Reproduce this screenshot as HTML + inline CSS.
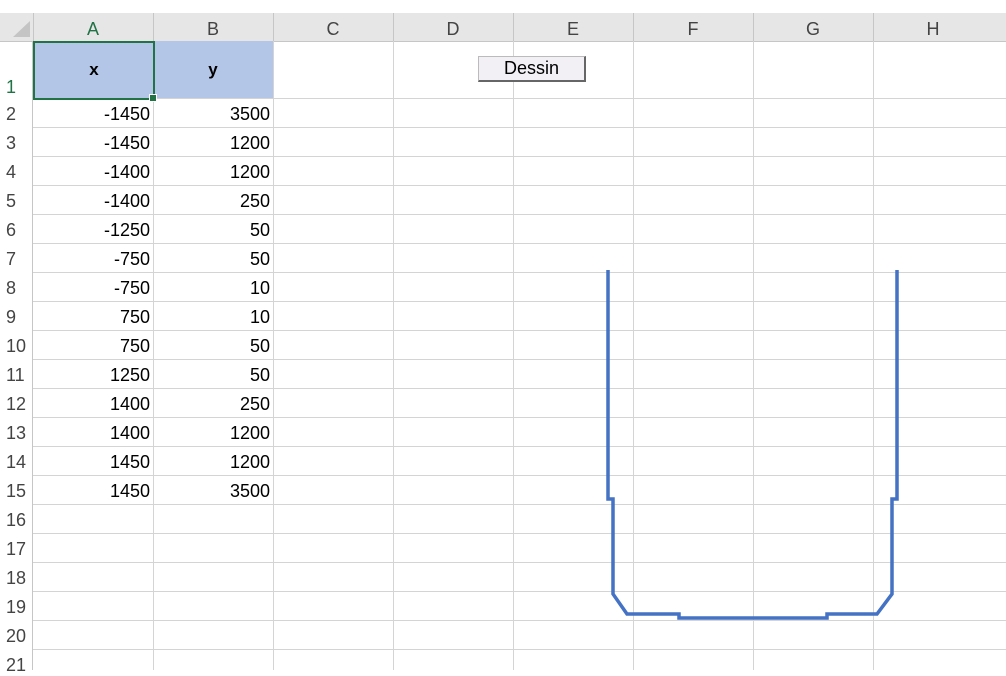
<!DOCTYPE html>
<html><head><meta charset="utf-8"><style>
body{margin:0;width:1006px;height:670px;overflow:hidden;background:#fff;font-family:"Liberation Sans",sans-serif;position:relative}
.a{position:absolute}
.hl{position:absolute;height:1px;background:#d4d4d4;left:33px;right:0}
.vl{position:absolute;width:1px;background:#d4d4d4;top:41px;bottom:0}
.ch{position:absolute;top:13px;height:28px;line-height:32px;text-align:center;font-size:18px;color:#444;width:120px}
.rh{position:absolute;left:0;width:30px;font-size:18px;color:#444;padding-left:6px}
.n{position:absolute;text-align:right;font-size:18px;color:#000;width:117px}
</style></head><body>
<div class="a" style="left:0;top:13px;width:1006px;height:28px;background:#e6e6e6;border-bottom:1px solid #c6c6c6"></div>
<div class="a" style="left:0;top:13px;width:33px;height:28px;background:#e6e6e6;border-right:1px solid #c6c6c6"></div>
<svg class="a" style="left:8px;top:19px" width="24" height="20"><polygon points="22,2 22,18 5,18" fill="#c4c4c4"/></svg>
<div class="a" style="left:33px;top:41px;width:240px;height:57px;background:#b4c6e7"></div>
<div class="a" style="left:32px;top:41px;width:1px;bottom:0;background:#c6c6c6"></div>
<div id="g"></div>
<div class="ch" style="left:33px;color:#217346">A</div>
<div class="ch" style="left:153px">B</div>
<div class="ch" style="left:273px">C</div>
<div class="ch" style="left:393px">D</div>
<div class="ch" style="left:513px">E</div>
<div class="ch" style="left:633px">F</div>
<div class="ch" style="left:753px">G</div>
<div class="ch" style="left:873px">H</div>
<div class="a" style="left:33px;top:41px;width:118px;height:55px;border:2px solid #217346"></div>
<div class="a" style="left:149px;top:94px;width:6px;height:6px;background:#217346;border:1px solid #fff"></div>
<div class="a" style="left:33px;top:60px;width:122px;text-align:center;font-weight:bold;font-size:17px">x</div>
<div class="a" style="left:153px;top:60px;width:120px;text-align:center;font-weight:bold;font-size:17px">y</div>
<div class="rh" style="top:77px;color:#217346">1</div>
<div class="a" style="left:478px;top:56px;width:105px;height:23px;background:#f3f0f5;border:1px solid #bbb;border-right:2px solid #666;border-bottom:2px solid #666;text-align:center;font-size:18px;line-height:23px">Dessin</div>
<svg class="a" style="left:0;top:0" width="1006" height="670"><polyline fill="none" stroke="#4472c4" stroke-width="3.5" points="608,270 608,499 613,499 613,594 627,614 679,614 679,618 827,618 827,614 877,614 892,594 892,499 897,499 897,270"/></svg>
<script>
var g=document.getElementById('g'),h='';
var d=[[-1450,3500],[-1450,1200],[-1400,1200],[-1400,250],[-1250,50],[-750,50],[-750,10],[750,10],[750,50],[1250,50],[1400,250],[1400,1200],[1450,1200],[1450,3500]];
h+='<div class="hl" style="top:98px"></div>';
for(var r=0;r<19;r++){var y=98+r*29;h+='<div class="hl" style="top:'+(y+29)+'px"></div>';}
for(var r=0;r<20;r++){var y=98+r*29;
h+='<div class="rh" style="top:'+(y+6)+'px">'+(r+2)+'</div>';
if(r<14){h+='<div class="n" style="left:33px;top:'+(y+6)+'px">'+d[r][0]+'</div><div class="n" style="left:153px;top:'+(y+6)+'px">'+d[r][1]+'</div>';}}
for(var c=1;c<8;c++)h+='<div class="vl" style="left:'+(33+c*120)+'px;top:'+(c<2?98:41)+'px"></div>';
for(var c=1;c<8;c++)h+='<div class="a" style="left:'+(33+c*120)+'px;top:13px;width:1px;height:28px;background:#c6c6c6"></div>';
g.innerHTML=h;
</script>
</body></html>
